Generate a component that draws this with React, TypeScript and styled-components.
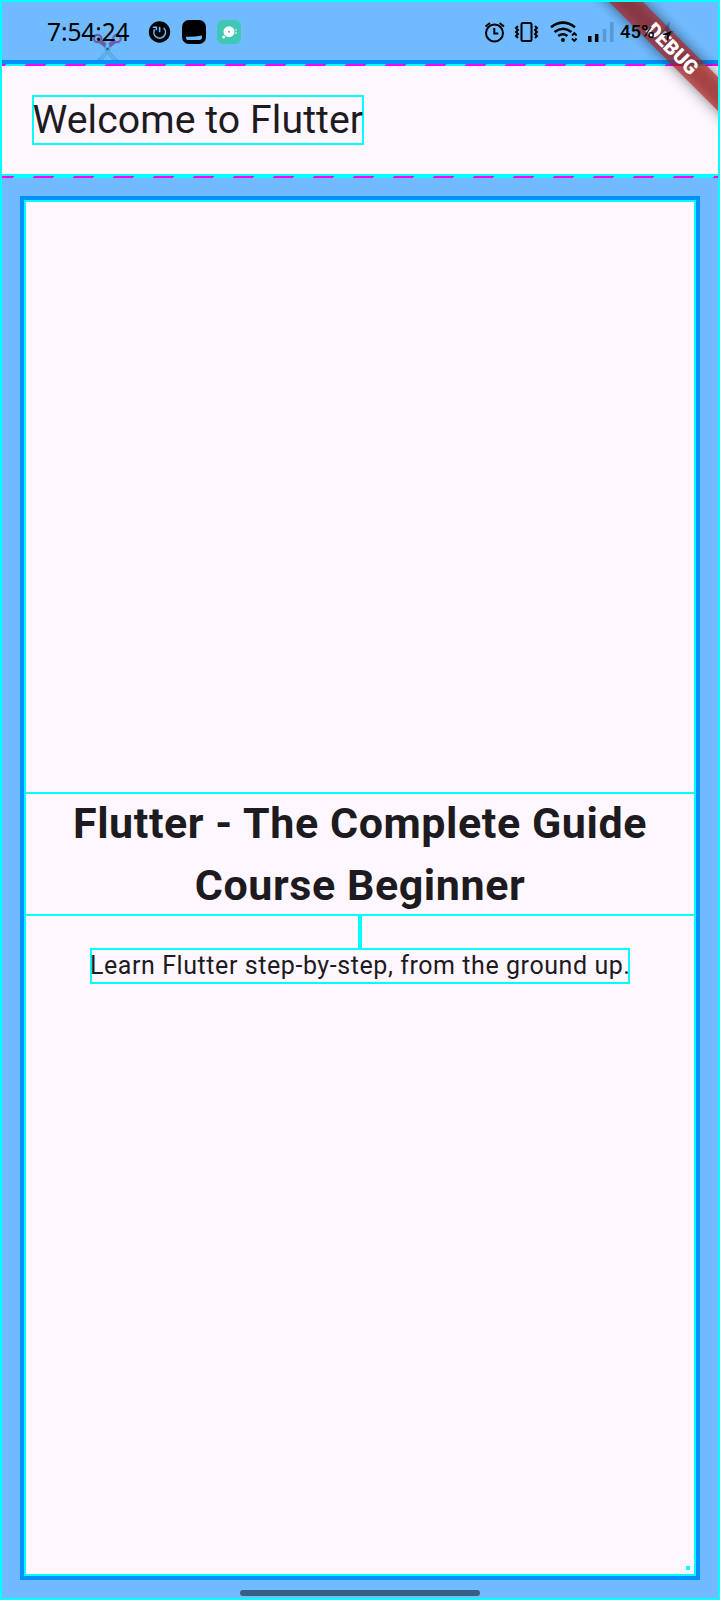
import React from "react";
import styled, { createGlobalStyle } from "styled-components";

const CYAN = "#00ffff";
const SKY = "#70bbff";
const BLUE = "#0090ff";
const SURFACE = "#fef7ff";
const INK = "#1d1b20";

const GlobalStyle = createGlobalStyle`
  * { box-sizing: border-box; }
  body { margin: 0; font-family: Roboto, "Liberation Sans", sans-serif; }
`;

const Screen = styled.main`
  position: relative;
  display: flex;
  flex-direction: column;
  width: 720px;
  height: 1600px;
  border: 2px solid ${CYAN};
  background: ${SKY};
  color: ${INK};
  overflow: hidden;
`;

const StatusBar = styled.header`
  position: relative;
  display: flex;
  justify-content: space-between;
  flex: none;
  height: 62px;
  padding: 0 48px 0 45px;
  border-bottom: 4px solid ${BLUE};
  color: #000;
`;

const StatusGroup = styled.div<{ $gap: number }>`
  position: relative;
  z-index: 1;
  display: flex;
  align-items: center;
  gap: ${(p) => p.$gap}px;
  height: 58px;
`;

const StatusIcons = styled.svg`
  flex: none;
  margin-top: 2px;
`;

const Clock = styled.time`
  width: 84px;
  margin-top: 2px;
  font: 400 24.5px/30px "Noto Sans", sans-serif;
  letter-spacing: -0.1px;
  white-space: nowrap;
`;

const Battery = styled.span`
  width: 50px;
  margin-top: 2px;
  font: 500 18.5px/24px Roboto, sans-serif;
  white-space: nowrap;
`;

const Scissors = styled.svg`
  position: absolute;
  left: 89px;
  top: 30px;
`;

const Bolt = styled.svg`
  position: absolute;
  z-index: 1;
  left: 658px;
  top: 18px;
`;

const DashRule = styled.div<{ $offset: number }>`
  flex: none;
  height: 2px;
  background:
    repeating-linear-gradient(90deg, #ff00ff 0 20px, ${CYAN} 20px 40px) ${(p) => p.$offset}px 0 / 760px 1px repeat-x,
    repeating-linear-gradient(90deg, #ff00ff 0 20px, ${CYAN} 20px 40px) ${(p) => p.$offset - 1}px 1px / 760px 1px repeat-x;
`;

const AppBar = styled.div`
  flex: none;
  height: 110px;
  padding: 29px 0 0 30px;
  border-bottom: 2px solid ${CYAN};
  background: ${SURFACE};
`;

const Title = styled.h1`
  width: 332px;
  height: 50px;
  margin: 0;
  border: 2px solid ${CYAN};
  font-size: 39.2px;
  font-weight: 400;
  line-height: 46px;
  letter-spacing: 0.08px;
  text-indent: -1.5px;
  white-space: nowrap;
`;

const Body = styled.section`
  display: flex;
  flex: none;
  flex-direction: column;
  align-items: center;
  height: 1384px;
  margin: 18px 18px 0;
  border: 4px solid ${BLUE};
  outline: 2px solid ${CYAN};
  outline-offset: -6px;
  padding: 592px 2px 0;
  background: ${SURFACE};
`;

const Heading = styled.h2`
  align-self: stretch;
  height: 124px;
  margin: 0;
  border: solid ${CYAN};
  border-width: 2px 0;
  font-size: 43px;
  font-weight: 700;
  line-height: 62px;
  letter-spacing: 0.57px;
  text-align: center;
`;

const HeadingText = styled.span`
  display: block;
  margin-top: -2px;
`;

const Spacer = styled.div`
  width: 4px;
  height: 32px;
  background: ${CYAN};
`;

const Lead = styled.p`
  width: 540px;
  height: 36px;
  margin: 0;
  border: 2px solid ${CYAN};
  font-size: 25px;
  line-height: 32px;
  letter-spacing: 0.57px;
  text-indent: -2px;
  white-space: nowrap;
`;

const Marker = styled.i`
  align-self: flex-end;
  width: 4px;
  height: 4px;
  margin: auto 4px 6px 0;
  background: ${CYAN};
`;

const HomeHandle = styled.div`
  align-self: center;
  flex: none;
  width: 240px;
  height: 6px;
  margin-top: 10px;
  border-radius: 3px;
  background: #385e80;
`;

const Ribbon = styled.div`
  position: absolute;
  left: 567px;
  top: 35.5px;
  width: 210px;
  height: 24px;
  color: #fff;
  font: 900 20px/24px Roboto, sans-serif;
  text-align: center;
  transform: rotate(45deg);

  &::before,
  &::after {
    content: "";
    position: absolute;
    inset: 0;
    z-index: -2;
    background: rgba(0, 0, 0, 0.5);
    filter: blur(7px);
  }

  &::after {
    z-index: -1;
    background: rgba(183, 28, 28, 0.627);
    filter: none;
  }
`;

const RibbonLabel = styled.span`
  position: relative;
  left: -2px;
`;

const Frame = styled.div`
  position: absolute;
  inset: -2px;
  border: 2px solid ${CYAN};
`;

export default function App() {
  return (
    <>
      <GlobalStyle />
      <Screen>
        <StatusBar>
          <StatusGroup $gap={16}>
            <Clock>7:54:24</Clock>
            <StatusIcons width="106" height="26" viewBox="147 19 106 26">
              <circle cx="159.5" cy="32" r="10.7" />
              <path d="M163.6 28a5.800 5.800 0 1 1-9 1.500M159.600 32.300v-5.500M152.800 27.300h3.600v3" fill="none" stroke={SKY} strokeWidth="1.6" />
              <rect x="182" y="20" width="24" height="24" rx="7" />
              <path d="M186 36.8q9 .2 16-1.2v1.6q0 2.8-2.6 2.8h-10.8q-2.6 0-2.6-2.6z" fill={SKY} />
              <rect x="217" y="20" width="24" height="24" rx="6" fill="#40c8b4" />
              <circle cx="229" cy="31.7" r="5.5" fill="#fff" />
              <circle cx="229" cy="31.7" r="1" fill="#40c8b4" />
              <circle cx="223.7" cy="37" r="1.5" fill="#fff" />
              <path d="M236 29v6" stroke="#a4e5dc" strokeWidth="1.6" strokeDasharray="2 1" />
            </StatusIcons>
          </StatusGroup>
          <StatusGroup $gap={6}>
            <StatusIcons width="130" height="26" viewBox="484 19 130 26" fill="none" stroke="#000" strokeWidth="2">
              <circle cx="494.5" cy="33" r="8.5" />
              <path d="M494.3 28v5.5h4M485.5 26.5l4.5-3.5M499.5 23l4.5 3.5" />
              <rect x="521.5" y="23" width="10" height="18" rx="1.5" />
              <path d="M518 26l-2 2 2 2-2 2 2 2-2 2 2 2M535 26l2 2-2 2 2 2-2 2 2 2-2 2" />
              <path d="M551 27.2q12-9 24 0M554.5 32q8.5-6.5 17 0M558.2 36q4.8-3.5 9.2 0" strokeWidth="2.6" />
              <circle cx="563" cy="40" r="2" fill="#000" stroke="none" />
              <path d="M572 35.5l2.3-2.3 2.3 2.3M572 38.500l2.3 2.3 2.3-2.3" strokeWidth="1.9" />
              <path d="M589.8 36v6M596.7 34v8" strokeWidth="3.5" />
              <path d="M604.5 29v13M611.8 22v20" stroke="#5898d3" strokeWidth="3.5" />
            </StatusIcons>
            <Battery>45%</Battery>
          </StatusGroup>
          <Bolt width="16" height="24" viewBox="660 20 16 24">
            <path d="M669.5 21L661 34h6l-2 8 9-11h-5z" fill="#17384f" opacity=".4" />
            <path d="M662 34.5L671.5 31 667 41.5v-6z" fill="#000" />
          </Bolt>
          <Scissors width="34" height="28" viewBox="91 32 34 28">
            <path d="M105 47l12.5 13h-4.5l-8-10zM110 47l-12.5 13h4.500l8-10z" fill="#61b5ea" stroke="#4c9dd2" strokeWidth=".8" />
            <g fill="none" stroke="#6860a8" strokeWidth="2.2">
              <circle cx="97.7" cy="38.5" r="3.7" />
              <circle cx="117" cy="38.5" r="3.7" />
              <path d="M99.5 42l6 4.500M115.5 42l-6 4.5M101.5 40.5l4.5 4M113.5 40.5l-4.5 4" />
            </g>
            <circle cx="107.5" cy="49" r="2.5" fill="#58a9df" />
            <circle cx="107.5" cy="49" r="1.2" fill="#155b92" />
          </Scissors>
        </StatusBar>
        <DashRule $offset={-16} />
        <AppBar>
          <Title>Welcome to Flutter</Title>
        </AppBar>
        <DashRule $offset={-8} />
        <Body>
          <Heading>
            <HeadingText>
              Flutter - The Complete Guide
              <br />
              Course Beginner
            </HeadingText>
          </Heading>
          <Spacer />
          <Lead>Learn Flutter step-by-step, from the ground up.</Lead>
          <Marker />
        </Body>
        <HomeHandle />
        <Ribbon>
          <RibbonLabel>DEBUG</RibbonLabel>
        </Ribbon>
        <Frame />
      </Screen>
    </>
  );
}
